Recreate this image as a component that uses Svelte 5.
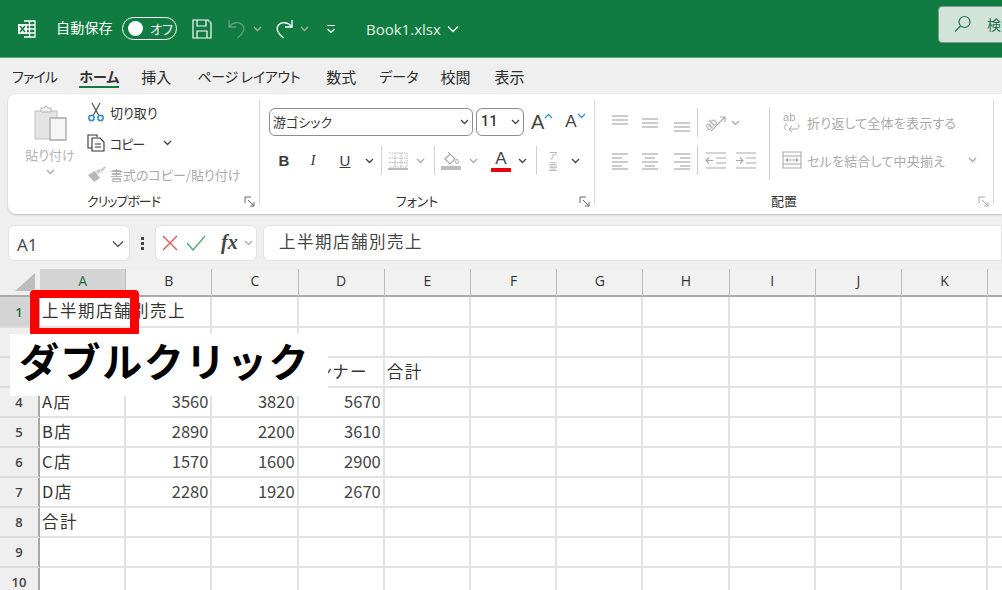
<script>
  const tabs = ['ファイル', 'ホーム', '挿入', 'ページ レイアウト', '数式', 'データ', '校閲', '表示'];
  const cols = ['A', 'B', 'C', 'D', 'E', 'F', 'G', 'H', 'I', 'J', 'K', 'L'];
  const rows = [
    ['上半期店舗別売上'],
    [],
    ['', '', '', 'インナー', '合計'],
    ['A店', 3560, 3820, 5670],
    ['B店', 2890, 2200, 3610],
    ['C店', 1570, 1600, 2900],
    ['D店', 2280, 1920, 2670],
    ['合計'],
    [],
    []
  ];

  // alignment icons: each line is [x1, x2, y]
  const alignTop = [[4, 20, 5], [4, 20, 9], [4, 20, 13]];
  const alignMid = [[4, 20, 8], [4, 20, 12], [4, 20, 16]];
  const alignBot = [[4, 20, 12], [4, 20, 16], [4, 20, 20]];
  const alignLeft = [[4, 20, 5], [4, 14, 9], [4, 20, 13], [4, 14, 17], [4, 20, 20]];
  const alignCenter = [[4, 20, 5], [7, 17, 9], [4, 20, 13], [7, 17, 17], [4, 20, 20]];
  const alignRight = [[4, 20, 5], [10, 20, 9], [4, 20, 13], [10, 20, 17], [4, 20, 20]];
</script>

{#snippet chev(cls = '')}
  <svg class="chev {cls}" width="9" height="6" viewBox="0 0 9 6"><path d="M1 1 L4.500 4.500 L8 1" fill="none" stroke="currentColor" stroke-width="1.300" /></svg>
{/snippet}

{#snippet launcher()}
  <svg class="launcher" width="11" height="11" viewBox="0 0 11 11"><path d="M1 7V1h6M4 4l6 6M6 10h4V6" fill="none" stroke="currentColor" stroke-width="1" /></svg>
{/snippet}

{#snippet lines(list)}
  <svg width="24" height="24" viewBox="0 0 24 24">
    {#each list as l}
      <line x1={l[0]} x2={l[1]} y1={l[2]} y2={l[2]} stroke="#aaa" stroke-width="1.200" />
    {/each}
  </svg>
{/snippet}

<div class="app">
  <header class="title">
    <svg class="logo" width="20" height="20" viewBox="0 0 20 20">
      <path d="M7 2h11v16H7M12.500 2v16M7 6h11M7 10h11M7 14h11" fill="none" stroke="#fff" stroke-width="1.300" />
      <rect x="1" y="5" width="9" height="10" fill="#fff" />
      <path d="M3 7l5 6M8 7l-5 6" stroke="#107c41" stroke-width="1.500" />
    </svg>
    <span class="autosave">自動保存</span>
    <div class="toggle"><i></i><span>オフ</span></div>
    <svg class="save" width="20" height="20" viewBox="0 0 20 20">
      <path d="M1 1h15l3 3v15H1zM5 1v6h9V1M5 19v-7h10v7" fill="none" stroke="#fff" stroke-width="1.200" />
    </svg>
    <svg class="undo" width="20" height="20" viewBox="0 0 20 20">
      <path d="M2 1v7h7M2.500 7.500C6 3 12 2.500 15.500 6c3 3.500 1 8-5 13" fill="none" stroke="#5f9f7e" stroke-width="1.300" />
    </svg>
    <span class="undo-chev">{@render chev()}</span>
    <svg class="redo" width="20" height="20" viewBox="0 0 20 20">
      <path d="M18 1v7h-7M17.500 7.500C14 3 8 2.500 4.500 6c-3 3.500-1 8 5 13" fill="none" stroke="#fff" stroke-width="1.300" />
    </svg>
    <span class="redo-chev">{@render chev()}</span>
    <svg class="qat" width="10" height="10" viewBox="0 0 10 10"><path d="M1 1.500h8M1.500 5L5 8.500 8.500 5" fill="none" stroke="#fff" stroke-width="1.200" /></svg>
    <span class="book">Book1.xlsx</span>
    <svg class="book-chev" width="12" height="8" viewBox="0 0 12 8"><path d="M1 1.500l5 5 5-5" fill="none" stroke="#fff" stroke-width="1.300" /></svg>
    <div class="search">
      <svg width="18" height="18" viewBox="0 0 18 18"><circle cx="10.500" cy="7" r="5.500" fill="none" stroke="#24704a" stroke-width="1.200" /><path d="M6.500 11L1 16.500" stroke="#24704a" stroke-width="1.300" /></svg>
      <span>検索</span>
    </div>
  </header>

  <nav class="tabs">
    {#each tabs as tab, i}
      <span class="tab" class:active={i === 1}>{tab}</span>
    {/each}
  </nav>

  <section class="ribbon">
    <div class="group clip">
      <div class="body clip-body">
        <div class="paste">
          <svg width="36" height="36" viewBox="0 0 36 36">
            <path d="M3 6h22v28H3z" fill="#e4e4e4" stroke="#bdbdbd" />
            <path d="M9 7V3h3l2-2 2 2h3v4z" fill="#f2f2f2" stroke="#b4b4b4" />
            <path d="M18 13h16v22H18z" fill="#f6f6f6" stroke="#a8a8a8" stroke-width="1.300" />
          </svg>
          <span>貼り付け</span>
          {@render chev()}
        </div>
        <div class="clip-list">
          <div class="clip-row">
            <svg width="18" height="20" viewBox="0 0 18 20">
              <path d="M5 1l6.500 12M13 1L6.500 13" stroke="#444" stroke-width="1.100" fill="none" />
              <circle cx="4.500" cy="16" r="2.600" fill="none" stroke="#3a8fd0" stroke-width="1.600" />
              <circle cx="13.500" cy="16" r="2.600" fill="none" stroke="#3a8fd0" stroke-width="1.600" />
            </svg>
            <span>切り取り</span>
          </div>
          <div class="clip-row tight">
            <svg width="20" height="20" viewBox="0 0 20 20">
              <path d="M5 15H1V2h9v2" fill="none" stroke="#333" stroke-width="1.100" />
              <path d="M5 5h8l4 4v9H5zM8 11h6M8 14h6" fill="none" stroke="#333" stroke-width="1.100" />
            </svg>
            <span class="copy">コピー</span>
            <span class="copy-chev">{@render chev()}</span>
          </div>
          <div class="clip-row tight off">
            <svg width="20" height="18" viewBox="0 0 20 18">
              <path d="M1 10l7-4 5 7-6 4z" fill="#b8b8b8" />
              <path d="M9 6l3-2 2 3-3 2zM13 5l5-4 1 1-4 5z" fill="#c8c8c8" />
            </svg>
            <span>書式のコピー/貼り付け</span>
          </div>
        </div>
      </div>
      <div class="glabel"><span class="narrow">クリップボード</span>{@render launcher()}</div>
    </div>
    <div class="gsep"></div>

    <div class="group font">
      <div class="body stack">
        <div class="font-row1">
          <div class="select face"><span>游ゴシック</span>{@render chev()}</div>
          <div class="select size"><span>11</span>{@render chev()}</div>
          <div class="grow"><span class="big">A</span><svg width="9" height="6" viewBox="0 0 9 6"><path d="M1 5l3.500-3.500L8 5" fill="none" stroke="#3a8fd0" stroke-width="1.300" /></svg></div>
          <div class="shrink"><span class="small">A</span><svg width="9" height="6" viewBox="0 0 9 6"><path d="M1 1l3.500 3.500L8 1" fill="none" stroke="#3a8fd0" stroke-width="1.300" /></svg></div>
        </div>
        <div class="font-row2">
          <b class="tb">B</b>
          <i class="tb serif">I</i>
          <u class="tb">U</u>
          {@render chev('dark')}
          <div class="vsep"></div>
          <svg width="20" height="20" viewBox="0 0 20 20">
            <path d="M1 2h18v14H1M7 2v14M13 2v14M1 7h18M1 11.500h18" fill="none" stroke="#b4b4b4" stroke-dasharray="1.500 1" />
            <path d="M0 18h20" stroke="#a4a4a4" stroke-width="1.500" />
          </svg>
          {@render chev()}
          <div class="vsep"></div>
          <svg width="20" height="20" viewBox="0 0 20 20">
            <path d="M4 8l5-5 5 5-5 5z" fill="none" stroke="#a8a8a8" stroke-width="1.200" />
            <path d="M7 1l2 2M16 8c1 1.500 1.500 2 1.500 3a1.400 1.400 0 0 1-3 0c0-1 .5-1.500 1.500-3z" fill="none" stroke="#a8a8a8" />
            <rect x="0" y="15" width="20" height="4" fill="#bdbdbd" />
          </svg>
          {@render chev()}
          <div class="acolor"><span>A</span><i></i></div>
          {@render chev('dark')}
          <div class="vsep"></div>
          <div class="furi"><span>ア</span><span>亜</span></div>
          {@render chev('dark')}
        </div>
      </div>
      <div class="glabel"><span>フォント</span>{@render launcher()}</div>
    </div>
    <div class="gsep"></div>

    <div class="group align">
      <div class="body align-body">
        <div class="align-left">
          <div class="align-row">
            <span class="ic">{@render lines(alignTop)}</span>
            <span class="ic">{@render lines(alignMid)}</span>
            <span class="ic">{@render lines(alignBot)}</span>
            <div class="vsep"></div>
            <span class="orient">
              <svg width="24" height="22" viewBox="0 0 24 22">
                <text x="1" y="15" transform="rotate(-40 8 12)" class="ab">ab</text>
                <path d="M7 19L21 5M16 5h5v5" fill="none" stroke="#aaa" stroke-width="1.100" />
              </svg>
            </span>
            {@render chev()}
          </div>
          <div class="align-row">
            <span class="ic">{@render lines(alignLeft)}</span>
            <span class="ic">{@render lines(alignCenter)}</span>
            <span class="ic">{@render lines(alignRight)}</span>
            <div class="vsep"></div>
            <svg class="indent" width="24" height="22" viewBox="0 0 24 22">
              <path d="M2 3h20M12 8h10M12 13h10M2 18h20M9 10.500H2M5 7.500l-3 3 3 3" fill="none" stroke="#aaa" stroke-width="1.100" />
            </svg>
            <svg class="indent" width="24" height="22" viewBox="0 0 24 22">
              <path d="M2 3h20M12 8h10M12 13h10M2 18h20M2 10.500h7M6 7.500l3 3-3 3" fill="none" stroke="#aaa" stroke-width="1.100" />
            </svg>
          </div>
        </div>
        <div class="vsep tall"></div>
        <div class="align-right">
          <div class="wide-row">
            <svg width="20" height="22" viewBox="0 0 20 22">
              <text x="1" y="10" class="ab">ab</text>
              <path d="M16 13c2 2 1 5-2 5H7M10 15l-3 3 3 3M5 13c-3 1-3 4-1 6" fill="none" stroke="#aaa" stroke-width="1" />
            </svg>
            <span>折り返して全体を表示する</span>
          </div>
          <div class="wide-row">
            <svg width="20" height="20" viewBox="0 0 20 20">
              <path d="M1 2h18v16H1zM1 6h18M1 14h18M4 10h12M6 8l-2 2 2 2M14 8l2 2-2 2" fill="none" stroke="#aaa" stroke-width="1.100" />
            </svg>
            <span>セルを結合して中央揃え</span>
            <span class="merge-chev">{@render chev()}</span>
          </div>
        </div>
      </div>
      <div class="glabel"><span>配置</span>{@render launcher()}</div>
    </div>
    <div class="gsep"></div>
  </section>

  <div class="formula">
    <div class="box namebox"><span>A1</span><svg width="12" height="8" viewBox="0 0 12 8"><path d="M1 1.500l5 5 5-5" fill="none" stroke="#444" stroke-width="1.200" /></svg></div>
    <div class="dots"><i></i><i></i><i></i></div>
    <div class="box fxbox">
      <svg width="18" height="18" viewBox="0 0 18 18"><path d="M2 2l14 14M16 2L2 16" stroke="#e2595a" stroke-width="1.400" /></svg>
      <svg width="22" height="18" viewBox="0 0 22 18"><path d="M2 9l6 7L20 2" fill="none" stroke="#56a872" stroke-width="1.400" /></svg>
      <span class="fx">fx</span>
      {@render chev()}
    </div>
    <div class="box input"><span>上半期店舗別売上</span></div>
  </div>

  <div class="sheet">
    <div class="corner"><svg width="20" height="18" viewBox="0 0 20 18"><path d="M20 0v18H0z" fill="#bdbdbd" /></svg></div>
    {#each cols as c, i}
      <div class="colhead" class:sel={i === 0}>{c}</div>
    {/each}
    {#each rows as row, r}
      <div class="rowhead" class:sel={r === 0}>{r + 1}</div>
      {#each cols as c, i}
        <div class="cell" class:num={typeof row[i] === 'number'} class:noline={r === 0 && i === 0}>{row[i] ?? ''}</div>
      {/each}
    {/each}
  </div>

  <div class="redbox"></div>
  <div class="note">ダブルクリック</div>
</div>

<style>
  :global(body) {
    margin: 0;
    background: #efefef;
  }

  .app {
    position: relative;
    width: 1002px;
    height: 590px;
    overflow: hidden;
    background: #efefef;
    font-family: "Noto Sans CJK JP", "Noto Sans", sans-serif;
    font-feature-settings: "palt";
    color: #333;
  }

  /* title bar */
  .title {
    display: flex;
    align-items: center;
    height: 57px;
    padding-left: 17px;
    background: #107c41;
    color: #fff;
    border-bottom: 1px solid #5aa57d;
  }
  .logo { margin-right: 19px; }
  .autosave { font-size: 14px; width: 58px; margin-right: 8px; letter-spacing: 0.200px; padding-bottom: 3px; }
  .toggle {
    display: flex;
    align-items: center;
    width: 53px;
    height: 21px;
    border: 1px solid #fff;
    border-radius: 12px;
    margin-right: 15px;
  }
  .toggle i {
    width: 15px;
    height: 15px;
    border-radius: 50%;
    background: #fff;
    margin-left: 5px;
  }
  .toggle span { font-size: 13px; margin-left: 7px; padding-bottom: 1px; }
  .save { margin-right: 15px; }
  .undo { margin-right: 6px; }
  .undo-chev { display: flex; color: #5f9f7e; margin-right: 12px; }
  .redo { margin-right: 6px; }
  .redo-chev { display: flex; color: #fff; margin-right: 17px; }
  .qat { margin-right: 30px; }
  .book { font-family: "Open Sans", sans-serif; font-size: 15px; color: #e6f1eb; width: 81px; }
  .search {
    display: flex;
    align-items: center;
    gap: 15px;
    box-sizing: border-box;
    width: 90px;
    height: 37px;
    margin-left: auto;
    margin-right: -26px;
    margin-top: -9px;
    padding-left: 15px;
    flex: none;
    background: #d2e4da;
    border: 1px solid #7b9a88;
    border-radius: 4px;
    color: #24704a;
    font-size: 14px;
    white-space: nowrap;
  }

  /* tabs */
  .tabs {
    display: flex;
    align-items: center;
    height: 36px;
    padding-left: 12px;
    font-size: 14px;
    color: #2c2c2c;
  }
  .tab { margin-right: 22px; position: relative; }
  .tab:nth-child(1) { letter-spacing: -0.800px; }
  .tab:nth-child(3), .tab:nth-child(5), .tab:nth-child(7), .tab:nth-child(8) { font-size: 15px; }
  .tab:nth-child(3) { margin-right: 26px; }
  .tab:nth-child(4) { margin-right: 26px; letter-spacing: -0.300px; }
  .tab:nth-child(5) { margin-right: 23px; }
  .tab:nth-child(7) { margin-right: 24px; }
  .tab.active { font-weight: 700; color: #333; }
  .tab.active::after {
    content: "";
    position: absolute;
    left: 0;
    right: 0;
    bottom: -2px;
    height: 2px;
    background: #107c41;
  }

  /* ribbon */
  .ribbon {
    display: flex;
    height: 120px;
    margin-left: 8px;
    background: #fff;
    border-radius: 8px 0 0 8px;
    box-shadow: 0 1px 2px rgba(0, 0, 0, 0.22);
  }
  .group { display: flex; flex-direction: column; }
  .clip { width: 251px; }
  .font { width: 334px; }
  .align { width: 398px; }
  .gsep {
    width: 1px;
    margin: 6px 0 9px;
    background: #d8d8d8;
  }
  .body { height: 98px; }
  .glabel {
    display: flex;
    align-items: center;
    height: 18px;
    padding-right: 4px;
    font-size: 13px;
    color: #333;
  }
  .glabel span { flex: 1; text-align: center; padding-bottom: 2px; }
  .glabel .narrow { letter-spacing: -1px; }
  .launcher { color: #666; margin-left: 5px; }
  .align .launcher { color: #aaa; }
  .chev { color: #aaa; flex: none; }
  .chev.dark { color: #444; }

  .clip-body { display: flex; }
  .paste {
    display: flex;
    flex-direction: column;
    align-items: center;
    width: 54px;
    margin-left: 15px;
    padding-top: 11px;
    color: #b4b4b4;
    font-size: 13px;
  }
  .paste span { margin-top: 4px; line-height: 20px; }
  .paste .chev { margin-top: 4px; }
  .clip-list {
    display: flex;
    flex-direction: column;
    gap: 7px;
    padding-top: 6px;
    margin-left: 10px;
  }
  .clip-row {
    display: flex;
    align-items: center;
    gap: 5px;
    height: 24px;
    font-size: 13px;
    color: #333;
    white-space: nowrap;
  }
  .clip-row.tight { gap: 3px; }
  .clip-row.off { color: #aaa; }
  .copy { letter-spacing: -1px; }
  .copy-chev { display: flex; color: #444; margin-left: 16px; }
  .copy-chev :global(.chev) { color: #444; }

  .stack {
    display: flex;
    flex-direction: column;
    gap: 10px;
    padding-top: 14px;
    box-sizing: border-box;
  }
  .font-row1 {
    display: flex;
    align-items: center;
    height: 28px;
    padding-left: 9px;
  }
  .select {
    display: flex;
    align-items: center;
    justify-content: space-between;
    box-sizing: border-box;
    height: 28px;
    border: 1px solid #8c8c8c;
    border-radius: 6px;
    padding: 0 3px;
    font-size: 13px;
    color: #333;
  }
  .select span { padding-bottom: 2px; }
  .select :global(.chev) { color: #444; }
  .face { width: 204px; margin-right: 3px; }
  .size { width: 48px; padding-left: 4px; font-family: Roboto, sans-serif; font-size: 14px; font-weight: 500; letter-spacing: 0.500px; }
  .grow, .shrink { display: flex; align-items: flex-start; color: #444; font-family: "Liberation Sans", sans-serif; }
  .grow { margin-left: 7px; }
  .shrink { margin-left: 12px; }
  .big { font-size: 20px; line-height: 24px; }
  .small { font-size: 17px; line-height: 24px; }
  .grow svg, .shrink svg { margin-top: 3px; }

  .font-row2 {
    display: grid;
    grid-template-columns: 28px 30px 34px 14px 10px 24px 20px 8px 26px 18px 32px 16px 12px 22px 22px;
    align-items: center;
    justify-items: center;
    height: 29px;
    padding-left: 10px;
  }
  .tb { font-family: "Liberation Sans", sans-serif; font-size: 15px; color: #3a3a3a; }
  .serif { font-family: "Liberation Serif", serif; }
  .vsep { width: 1px; height: 29px; background: #cfcfcf; flex: none; }
  .vsep.tall { height: 73px; margin-top: 13px; }
  .acolor {
    display: flex;
    flex-direction: column;
    align-items: center;
    justify-self: end;
    width: 20px;
    margin-right: 3px;
    color: #444;
    font-family: "Liberation Sans", sans-serif;
    font-size: 17px;
    line-height: 19px;
  }
  .acolor i { width: 20px; height: 4px; background: #e8000b; }
  .furi {
    display: flex;
    flex-direction: column;
    align-items: center;
    color: #aaa;
    font-size: 9px;
    line-height: 11px;
  }

  .align-body { display: flex; }
  .align-left {
    display: flex;
    flex-direction: column;
    gap: 9px;
    width: 174px;
    padding-top: 14px;
    padding-left: 10px;
    box-sizing: border-box;
  }
  .align-row {
    display: flex;
    align-items: center;
    height: 29px;
  }
  .ic { display: flex; width: 30px; justify-content: center; }
  .ic:nth-child(3) { margin-left: 2px; }
  .align-row .vsep { margin-right: 3px; }
  .orient { display: flex; margin: 0 3px; }
  .ab { font-family: "Liberation Sans", sans-serif; font-size: 11px; fill: #aaa; }
  .indent { margin: 0 3px; }
  .align-right {
    display: flex;
    flex-direction: column;
    gap: 12px;
    padding-top: 15px;
    padding-left: 12px;
  }
  .wide-row {
    display: flex;
    align-items: center;
    gap: 5px;
    height: 26px;
    font-size: 13px;
    letter-spacing: 0.200px;
    color: #aaa;
    white-space: nowrap;
  }
  .merge-chev { display: flex; margin-left: 18px; }

  /* formula bar */
  .formula {
    display: flex;
    align-items: center;
    height: 36px;
    margin-top: 11px;
    padding-left: 8px;
  }
  .box {
    box-sizing: border-box;
    height: 36px;
    background: #fff;
    border: 1px solid #e2e2e2;
    border-radius: 6px;
    display: flex;
    align-items: center;
  }
  .namebox {
    width: 122px;
    justify-content: space-between;
    padding: 2px 5px 0 8px;
    font-family: "Open Sans", sans-serif;
    font-size: 17px;
    color: #444;
  }
  .dots {
    display: flex;
    flex-direction: column;
    gap: 2px;
    width: 25px;
    align-items: center;
  }
  .dots i { width: 3px; height: 3px; background: #444; }
  .fxbox { width: 102px; padding-left: 5px; gap: 6px; }
  .fx { font-family: "Liberation Serif", serif; font-style: italic; font-weight: 700; font-size: 20px; color: #444; margin-left: 8px; margin-right: 0; padding-bottom: 2px; }
  .input {
    flex: 1;
    margin-left: 6px;
    padding-left: 15px;
    font-size: 16.500px;
    letter-spacing: 1.500px;
    color: #444;
    border-radius: 6px 0 0 6px;
  }
  .input span { margin-bottom: 5px; }

  /* sheet */
  .sheet {
    display: grid;
    grid-template-columns: 40px repeat(12, 86.200px);
    grid-template-rows: 28px 31px repeat(9, 30px);
    margin-top: 8px;
    background: #fff;
  }
  .corner {
    display: flex;
    justify-content: flex-end;
    align-items: flex-end;
    padding: 0 5px 4px 0;
    background: #efefef;
    border-bottom: 2px solid #ababab;
    box-sizing: border-box;
  }
  .colhead {
    display: flex;
    align-items: center;
    justify-content: center;
    padding-bottom: 4px;
    background: #f1f1f1;
    border-right: 1px solid #bdbdbd;
    border-bottom: 2px solid #ababab;
    box-sizing: border-box;
    font-family: "Open Sans", sans-serif;
    font-size: 14px;
    color: #333;
  }
  .colhead.sel { background: #d4d4d4; color: #1d6b41; }
  .rowhead {
    display: flex;
    align-items: center;
    justify-content: center;
    background: #efefef;
    border-right: 2px solid #a8a8a8;
    border-bottom: 2px solid #dcdcdc;
    box-sizing: border-box;
    font-family: "Open Sans", sans-serif;
    font-size: 13px;
    font-weight: 600;
    color: #444;
  }
  .rowhead.sel { background: #d4d4d4; color: #1d6b41; }
  .cell {
    box-sizing: border-box;
    padding-left: 2px;
    border-right: 2px solid #e2e2e2;
    border-bottom: 2px solid #e2e2e2;
    font-size: 16.500px;
    line-height: 26px;
    letter-spacing: 1.500px;
    color: #333;
    white-space: nowrap;
    min-width: 0;
  }
  .cell.noline { border-right-color: transparent; }
  .cell.num {
    padding: 0 2px 0 0;
    text-align: right;
    letter-spacing: 0;
    color: #444;
  }

  /* annotations over the sheet */
  .redbox {
    position: absolute;
    left: 30px;
    top: 290px;
    width: 109px;
    height: 46px;
    box-sizing: border-box;
    border: solid #fe0000;
    border-width: 8px 9px 8px 9px;
    border-radius: 4px;
  }
  .note {
    position: absolute;
    left: 10px;
    top: 334px;
    width: 318px;
    height: 62px;
    padding-left: 9px;
    box-sizing: border-box;
    background: #fff;
    color: #000;
    font-size: 40px;
    font-weight: 700;
    line-height: 53px;
    letter-spacing: 1.600px;
    font-feature-settings: normal;
    white-space: nowrap;
  }
</style>
